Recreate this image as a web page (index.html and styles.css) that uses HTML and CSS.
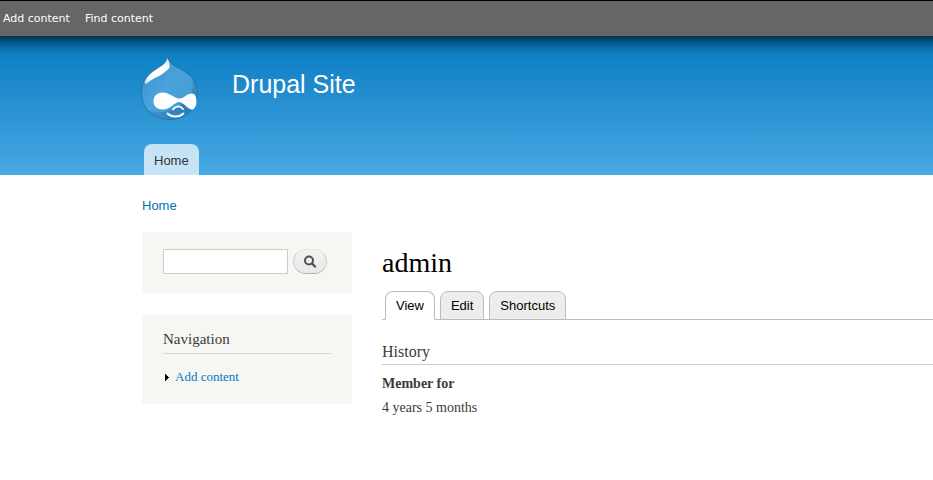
FILE: index.html
```html
<!DOCTYPE html>
<html lang="en">
<head>
<meta charset="utf-8">
<title>admin | Drupal Site</title>
<link rel="stylesheet" href="styles.css">
</head>
<body>
<nav class="toolbar" aria-label="Shortcuts">
  <a href="#">Add content</a>
  <a href="#">Find content</a>
</nav>
<header class="header">
  <div class="branding">
    <a class="logo" href="#" aria-label="Home page">
      <svg width="58" height="65" viewBox="0 0 58 65" aria-hidden="true">
        <defs>
          <linearGradient id="drop" x1="0" y1="0" x2="1" y2="1">
            <stop offset="0" stop-color="#2f8fd0"/>
            <stop offset=".45" stop-color="#4ba2da"/>
            <stop offset="1" stop-color="#3f97d2"/>
          </linearGradient>
          <linearGradient id="shine" x1="1" y1="0" x2="0" y2="1">
            <stop offset="0" stop-color="#c4e0f4"/>
            <stop offset=".3" stop-color="#ffffff"/>
            <stop offset=".8" stop-color="#ffffff"/>
            <stop offset="1" stop-color="#ffffff" stop-opacity=".6"/>
          </linearGradient>
          <linearGradient id="shade" x1="0" y1="1" x2="1" y2="0">
            <stop offset="0" stop-color="#1d70ab" stop-opacity=".2"/>
            <stop offset=".5" stop-color="#1d70ab" stop-opacity=".65"/>
            <stop offset="1" stop-color="#1d70ab" stop-opacity=".3"/>
          </linearGradient>
          <clipPath id="shape"><path d="M26.500 .5C28 8 34 10 40 13.500C51 19 56.500 27 56.500 37.500C56.500 53 44 63.500 29 63.500C13 63.500 .5 53 .5 37C.5 28 5 20 13 14.500C19 10 25 9 26.500 .5Z"/></clipPath>
        </defs>
        <g clip-path="url(#shape)">
          <rect width="58" height="65" fill="url(#drop)"/>
          <path d="M49 17C56 31 50 43 38 50C27 57 13 58 4 53L10 65H58V20Z" fill="url(#shade)"/>
          <path d="M26.500 0C25 6 21 9 15.500 11.500C9 15 5 19 3.500 24C3 27 4 28 6 27.500C9 24 14 22 18 20C23 17.500 25 14.500 27.500 13C30 11 28 5 26.500 0Z" fill="url(#shine)"/>
        </g>
        <path d="M26.500 .5C28 8 34 10 40 13.500C51 19 56.500 27 56.500 37.500C56.500 53 44 63.500 29 63.500C13 63.500 .5 53 .5 37C.5 28 5 20 13 14.500C19 10 25 9 26.500 .5Z" fill="none" stroke="#246a9c" stroke-opacity=".75"/>
        <path d="M22 36.500C29 36.500 33 42.500 38.500 42.500C43 42.500 46 37.500 50.500 37.500C54 37.500 55.500 41 55.500 45C55.500 49 54 53.500 51 53.500C47 53.500 42 46 38.500 46C33 46 30 53.500 22 53.500C16 53.500 12.500 50 12.500 45.500C12.500 40 16 36.500 22 36.500Z" fill="#fff"/>
        <path d="M32 53.500C35 49.500 39 49.500 42 53M26.500 57.500C31 61.500 38 61.500 42.500 57.500" fill="none" stroke="#fff" stroke-width="1.800" stroke-linecap="round"/>
      </svg>
    </a>
    <a class="site-name" href="#">Drupal Site</a>
  </div>
  <nav class="main-menu" aria-label="Main menu"><a href="#">Home</a></nav>
</header>
<nav class="breadcrumb" aria-label="Breadcrumb"><a href="#">Home</a></nav>
<div class="columns">
  <aside class="sidebar">
    <form class="block search" role="search">
      <input class="search-text" type="text" aria-label="Search">
      <button class="search-button" type="button" aria-label="Search">
        <svg width="14" height="14" viewBox="0 0 14 14" aria-hidden="true"><circle cx="6" cy="5.500" r="4" fill="none" stroke="#505050" stroke-width="2"/><path d="M9 8.500L12 11.500" stroke="#505050" stroke-width="2.400" stroke-linecap="round"/></svg>
      </button>
    </form>
    <section class="block navigation">
      <h2>Navigation</h2>
      <ul>
        <li><svg width="4" height="7" viewBox="0 0 4 7" shape-rendering="crispEdges" aria-hidden="true"><path d="M0 0H1V1H2V2H3V3H4V4H3V5H2V6H1V7H0Z"/></svg><a href="#">Add content</a></li>
      </ul>
    </section>
  </aside>
  <main class="content">
    <h1>admin</h1>
    <nav class="tabs" aria-label="Tabs">
      <a class="tab active" href="#">View</a>
      <a class="tab" href="#">Edit</a>
      <a class="tab" href="#">Shortcuts</a>
    </nav>
    <section class="history">
      <h2>History</h2>
      <dl>
        <dt>Member for</dt>
        <dd>4 years 5 months</dd>
      </dl>
    </section>
  </main>
</div>
</body>
</html>
```

FILE: styles.css
```css
* {
  box-sizing: border-box;
}

body {
  margin: 0;
  background: #fff;
  color: #3b3b3b;
  font: 14px/20px "Liberation Serif", serif;
}

h1, h2, ul, dl, dd {
  margin: 0;
  padding: 0;
  font-weight: normal;
}

a {
  color: #0071b3;
  text-decoration: none;
}

.toolbar {
  display: flex;
  align-items: center;
  gap: 15px;
  height: 36px;
  padding: 0 3px;
  border-top: 1px solid #000;
  background: #666;
  font: 11px/20px "DejaVu Sans", sans-serif;
}

.toolbar a {
  color: #fefefe;
}

.header {
  padding: 20px 0 0 141px;
  background:
    linear-gradient(rgba(0, 0, 0, .6), rgba(0, 0, 0, .3) 6px, rgba(0, 0, 0, .08) 14px, transparent 20px),
    linear-gradient(#0779bf, #48a9e4);
  font-family: "Liberation Sans", sans-serif;
}

.branding {
  display: flex;
  align-items: flex-start;
  gap: 33px;
  height: 88px;
}

.logo svg {
  display: block;
}

.site-name {
  padding-top: 13px;
  color: #fff;
  font-size: 25px;
  line-height: 30px;
}

.main-menu {
  display: flex;
  padding-left: 3px;
}

.main-menu a {
  padding: 7px 10px 4px;
  border-radius: 8px 8px 0 0;
  background: rgba(255, 255, 255, .7);
  color: #333;
  font-size: 13px;
}

.breadcrumb {
  padding: 21px 0 0 142px;
  font: 13px/20px "Liberation Sans", sans-serif;
}

.columns {
  display: grid;
  grid-template-columns: 210px 1fr;
  gap: 30px;
  padding: 16px 0 0 142px;
}

.sidebar {
  display: flex;
  flex-direction: column;
  gap: 20px;
}

.block {
  padding: 14px 20px 15px;
  border: 1px solid #f9faf6;
  background: #f6f6f2;
}

.search {
  display: flex;
  gap: 5px;
  padding: 16px 20px 19px;
}

.search-text {
  width: 125px;
  height: 25px;
  padding: 4px;
  border: 1px solid #ccc;
  background: #fff;
  font: 13px/15px "Liberation Sans", sans-serif;
}

.search-button {
  display: grid;
  place-items: center;
  width: 34px;
  height: 25px;
  padding: 0;
  border: 1px solid #ccc;
  border-top-color: #e4e4e4;
  border-bottom-color: #b4b4b4;
  border-radius: 13px;
  background: linear-gradient(#f3f3f3, #e8e8e8);
}

.navigation h2 {
  padding-bottom: 4px;
  border-bottom: 1px solid #d6d6d6;
  font-size: 15px;
}

.navigation ul {
  padding: 13px 0 1px 2px;
  list-style: none;
}

.navigation li {
  display: flex;
  align-items: center;
  gap: 6px;
  font-size: 13px;
}

.navigation a {
  color: #0779bf;
}

.content {
  padding-top: 14px;
}

.content h1 {
  color: #000;
  font-size: 28px;
  line-height: 34px;
}

.tabs {
  display: flex;
  gap: 5px;
  margin-top: 11px;
  padding-left: 3px;
  border-bottom: 1px solid #bbb;
  font: 13px/20px "Liberation Sans", sans-serif;
}

.tab {
  margin-bottom: -1px;
  padding: 4px 10px 3px;
  border: 1px solid #bbb;
  border-radius: 8px 8px 0 0;
  background: #ededed;
  color: #000;
}

.tab.active {
  border-bottom-color: #fff;
  background: #fff;
}

.history {
  padding-top: 22px;
}

.history h2 {
  padding-bottom: 2px;
  border-bottom: 1px solid #ccc;
  font-size: 16px;
}

.history dl {
  padding-top: 9px;
}

.history dt {
  margin-bottom: 4px;
  font-weight: bold;
}
```
